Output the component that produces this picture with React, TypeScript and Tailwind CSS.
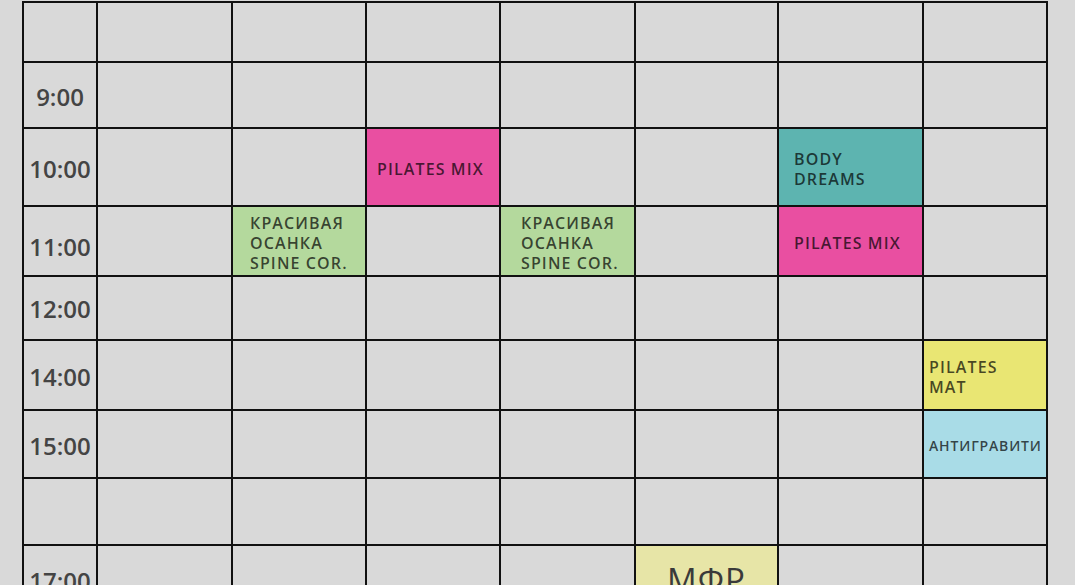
import React from "react";

type Cell = { text?: string; bg?: string; pl?: string; small?: boolean; big?: boolean };

const colW = ["w-[72px]", "w-[133px]", "w-[132px]", "w-[132px]", "w-[133px]", "w-[141px]", "w-[143px]", "w-[122px]"];
const rowH = ["h-[58px]", "h-[64px]", "h-[76px]", "h-[68px]", "h-[62px]", "h-[68px]", "h-[66px]", "h-[65px]", "h-[66px]"];
const times = ["", "9:00", "10:00", "11:00", "12:00", "14:00", "15:00", "", "17:00"];
const timePad = ["pt-[4px]", "pt-[4px]", "pt-[4px]", "pt-[12px]", "pt-[2px]", "pt-[4px]", "pt-[4px]", "pt-[4px]", "pt-[4px]"];

const cells: Record<string, Cell> = {
  "2-3": { text: "PILATES MIX", bg: "bg-[#e94fa1]", pl: "pl-[10px]" },
  "2-6": { text: "BODY\nDREAMS", bg: "bg-[#5db4b0]", pl: "pl-[15px]" },
  "3-2": { text: "КРАСИВАЯ\nОСАНКА\nSPINE COR.", bg: "bg-[#b4d99d]", pl: "pl-[17px]" },
  "3-4": { text: "КРАСИВАЯ\nОСАНКА\nSPINE COR.", bg: "bg-[#b4d99d]", pl: "pl-[20px]" },
  "3-6": { text: "PILATES MIX", bg: "bg-[#e94fa1]", pl: "pl-[15px]" },
  "5-7": { text: "PILATES\nMAT", bg: "bg-[#e9e673]", pl: "pl-[5px]" },
  "6-7": { text: "АНТИГРАВИТИ", bg: "bg-[#a9dce7]", pl: "pl-[5px]", small: true },
  "8-5": { text: "МФР", bg: "bg-[#e7e5a7]", big: true },
};

export default function App() {
  return (
    <div className="h-[585px] w-[1075px] overflow-hidden bg-[#d9d9d9] pl-[22px] pt-[1px] font-['Open_Sans',sans-serif]">
      <div className="grid w-fit grid-cols-[72px_133px_132px_132px_133px_141px_143px_122px] gap-[2px] bg-[#111] p-[2px]">
        {rowH.map((h, r) =>
          colW.map((w, c) => {
            if (c === 0) {
              return (
                <div
                  key={`${r}-${c}`}
                  className={`${h} ${w} ${timePad[r]} flex items-center justify-center bg-[#d9d9d9] text-[24px] font-semibold text-[#444]`}
                >
                  {times[r]}
                </div>
              );
            }
            const cell = cells[`${r}-${c}`];
            if (!cell) {
              return <div key={`${r}-${c}`} className={`${h} ${w} bg-[#d9d9d9]`} />;
            }
            if (cell.big) {
              return (
                <div
                  key={`${r}-${c}`}
                  className={`${h} ${w} ${cell.bg} flex items-center justify-center pt-[2px] text-[33px] font-medium tracking-[1px] text-[#3a3a3a]`}
                >
                  {cell.text}
                </div>
              );
            }
            return (
              <div
                key={`${r}-${c}`}
                className={`${h} ${w} ${cell.bg} ${cell.pl} flex flex-col justify-center whitespace-pre pt-[3px] leading-[20px] text-black/70 ${
                  cell.small ? "text-[14px] tracking-[0.06em] font-semibold" : "text-[16px] tracking-[0.07em] font-semibold"
                }`}
              >
                {cell.text}
              </div>
            );
          })
        )}
      </div>
    </div>
  );
}
